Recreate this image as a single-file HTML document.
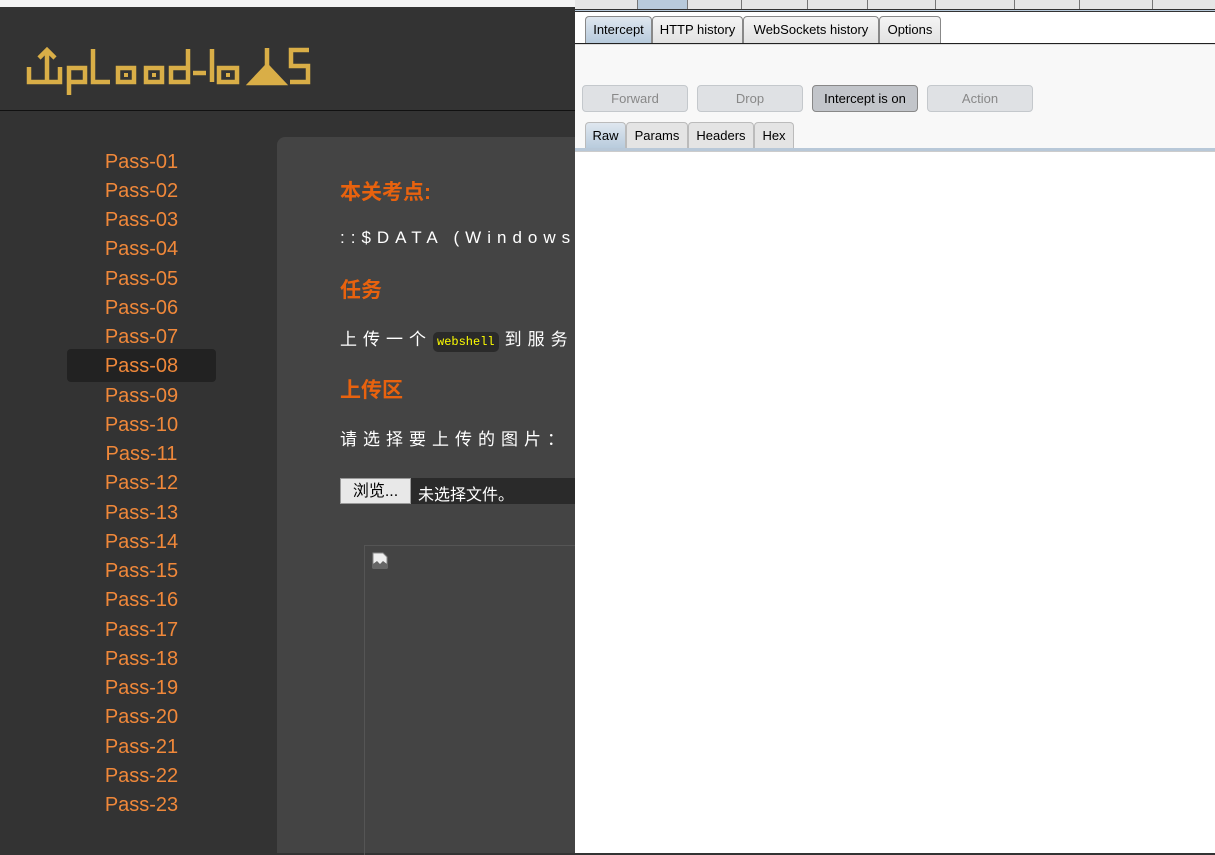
<!DOCTYPE html>
<html><head><meta charset="utf-8"><style>
*{margin:0;padding:0;box-sizing:border-box}
body{width:1215px;height:853px;overflow:hidden;background:#333;font-family:"Liberation Sans","Noto Sans CJK SC",sans-serif;position:relative}
.topw{position:absolute;left:0;top:0;width:575px;height:7px;background:#f4f4f4}
.hdr{position:absolute;left:0;top:7px;width:575px;height:104px;background:#333;border-bottom:1px solid #111}
.side{position:absolute;left:0;top:112px;width:277px;height:741px;background:#333}
.pass{position:absolute;left:67px;width:149px;height:33px;line-height:35px;text-align:center;color:#f0883a;font-size:20px;border-radius:4px}
.pass.act{background:#222}
.panel{position:absolute;left:277px;top:137px;width:400px;height:716px;background:#444;border-top-left-radius:8px}
.h{position:absolute;left:340px;color:#e8620e;font-size:21px;font-weight:bold}
.t{position:absolute;left:340px;color:#fff;font-size:17px;letter-spacing:6px;white-space:nowrap}
code{font-family:"Liberation Mono",monospace;font-size:12px;color:#ff0;background:#2a2a2a;border-radius:5px;padding:3px 4px;letter-spacing:0;margin:0 6px 0 0}
.burp{position:absolute;left:575px;top:0;width:640px;height:853px;background:#fff}
.tt{position:absolute;top:0;height:9px;border-right:1px solid #777;background:#e6e6e6}
.tab{position:absolute;height:27px;border:1px solid #888;border-bottom:none;border-radius:4px 4px 0 0;background:linear-gradient(#f4f4f4,#e2e2e2);font-size:13px;line-height:26px;text-align:center;color:#000}
.tab.sel{background:linear-gradient(#dfe7ef,#b7cadc)}
.btn{position:absolute;top:85px;height:27px;border:1px solid #c4c8cc;border-radius:4px;background:#dfe1e4;font-size:13px;line-height:25px;text-align:center;color:#888}
</style></head><body>
<div class="topw"></div>
<div class="hdr"></div>
<svg style="position:absolute;left:0;top:0" width="575" height="111" fill="none" stroke="#d9ae47" stroke-width="4.5" stroke-linejoin="miter">
<path d="M47 50V83M39 58L47 50L55 58"/>
<path d="M29 67V82H60V67"/>
<path d="M69 95V68H85V82H69"/>
<path d="M93 49V82H110"/>
<rect x="118" y="68" width="16" height="14"/><rect x="124" y="73" width="4" height="4" fill="#d9ae47" stroke="none"/>
<rect x="146" y="68" width="16" height="14"/><rect x="152" y="73" width="4" height="4" fill="#d9ae47" stroke="none"/>
<path d="M188 49V82H171V68H188"/>
<path d="M193 73H206"/>
<path d="M212 49V82"/>
<rect x="219" y="68" width="18" height="14"/><rect x="226" y="73" width="4" height="4" fill="#d9ae47" stroke="none"/>
<path d="M267 48V68"/><path d="M267 66L251 83H283Z" fill="#d9ae47"/>
<path d="M309 50H291V66H308V82H290"/>
</svg>
<div class="side"></div>
<div class="pass" style="top:145px">Pass-01</div>
<div class="pass" style="top:174px">Pass-02</div>
<div class="pass" style="top:203px">Pass-03</div>
<div class="pass" style="top:232px">Pass-04</div>
<div class="pass" style="top:262px">Pass-05</div>
<div class="pass" style="top:291px">Pass-06</div>
<div class="pass" style="top:320px">Pass-07</div>
<div class="pass act" style="top:349px">Pass-08</div>
<div class="pass" style="top:379px">Pass-09</div>
<div class="pass" style="top:408px">Pass-10</div>
<div class="pass" style="top:437px">Pass-11</div>
<div class="pass" style="top:466px">Pass-12</div>
<div class="pass" style="top:496px">Pass-13</div>
<div class="pass" style="top:525px">Pass-14</div>
<div class="pass" style="top:554px">Pass-15</div>
<div class="pass" style="top:583px">Pass-16</div>
<div class="pass" style="top:613px">Pass-17</div>
<div class="pass" style="top:642px">Pass-18</div>
<div class="pass" style="top:671px">Pass-19</div>
<div class="pass" style="top:700px">Pass-20</div>
<div class="pass" style="top:730px">Pass-21</div>
<div class="pass" style="top:759px">Pass-22</div>
<div class="pass" style="top:788px">Pass-23</div>
<div class="panel"></div>
<div class="h" style="top:176px">本关考点:</div>
<div class="t" style="top:228px">::$DATA (Windows</div>
<div class="h" style="top:274px">任务</div>
<div class="t" style="top:325px">上传一个<code style="margin-left:1px">webshell</code>到服务</div>
<div class="h" style="top:374px">上传区</div>
<div class="t" style="top:425px">请选择要上传的图片：</div>
<div style="position:absolute;left:340px;top:478px;width:240px;height:26px;background:#2a2a2a"></div>
<div style="position:absolute;left:340px;top:478px;width:71px;height:26px;background:#e8e8e8;border:1px solid #999;font-size:16px;line-height:26px;text-align:center;color:#000">浏览...</div>
<div style="position:absolute;left:418px;top:481px;color:#fff;font-size:16px">未选择文件。</div>
<div style="position:absolute;left:364px;top:545px;width:220px;height:310px;border-left:1px solid #555;border-top:1px solid #555"></div>
<svg style="position:absolute;left:372px;top:552px" width="16" height="17"><path d="M1 1H11L15 5V16H1Z" fill="#eee" stroke="#888"/><path d="M1 12L5 9L8 12L11 9L15 12V16H1Z" fill="#666"/></svg>
<div class="burp">
<div style="position:absolute;left:0;top:0;width:640px;height:9px;background:#e6e6e6"></div>
<div class="tt" style="left:0;width:63px"></div>
<div class="tt" style="left:63px;width:50px;background:#b8cadb"></div>
<div class="tt" style="left:113px;width:54px"></div>
<div class="tt" style="left:167px;width:66px"></div>
<div class="tt" style="left:233px;width:60px"></div>
<div class="tt" style="left:293px;width:68px"></div>
<div class="tt" style="left:361px;width:79px"></div>
<div class="tt" style="left:440px;width:65px"></div>
<div class="tt" style="left:505px;width:73px"></div>
<div style="position:absolute;left:0;top:9px;width:640px;height:3px;border-top:1px solid #333;border-bottom:1px solid #333;background:#b8cadb"></div>
<div class="tab sel" style="left:10px;top:16px;width:67px">Intercept</div>
<div class="tab" style="left:77px;top:16px;width:91px">HTTP history</div>
<div class="tab" style="left:168px;top:16px;width:136px">WebSockets history</div>
<div class="tab" style="left:304px;top:16px;width:62px">Options</div>
<div style="position:absolute;left:0;top:43px;width:640px;height:2px;border-top:1px solid #222;background:#ddd"></div>
<div style="position:absolute;left:0;top:45px;width:640px;height:104px;background:#f8f8f8"></div>
<div class="btn" style="left:7px;width:106px">Forward</div>
<div class="btn" style="left:122px;width:106px">Drop</div>
<div class="btn" style="left:237px;width:106px;background:#c2c5ca;border-color:#888;color:#000">Intercept is on</div>
<div class="btn" style="left:352px;width:106px">Action</div>
<div class="tab sel" style="left:10px;top:122px;width:41px;border-color:#bbb">Raw</div>
<div class="tab" style="left:51px;top:122px;width:62px;border-color:#bbb;background:#e4e4e4">Params</div>
<div class="tab" style="left:113px;top:122px;width:66px;border-color:#bbb;background:#e4e4e4">Headers</div>
<div class="tab" style="left:179px;top:122px;width:40px;border-color:#bbb;background:#e4e4e4">Hex</div>
<div style="position:absolute;left:0;top:148px;width:640px;height:4px;background:#b8c8d8;border-bottom:1px solid #ccc"></div>
</div>
</body></html>
